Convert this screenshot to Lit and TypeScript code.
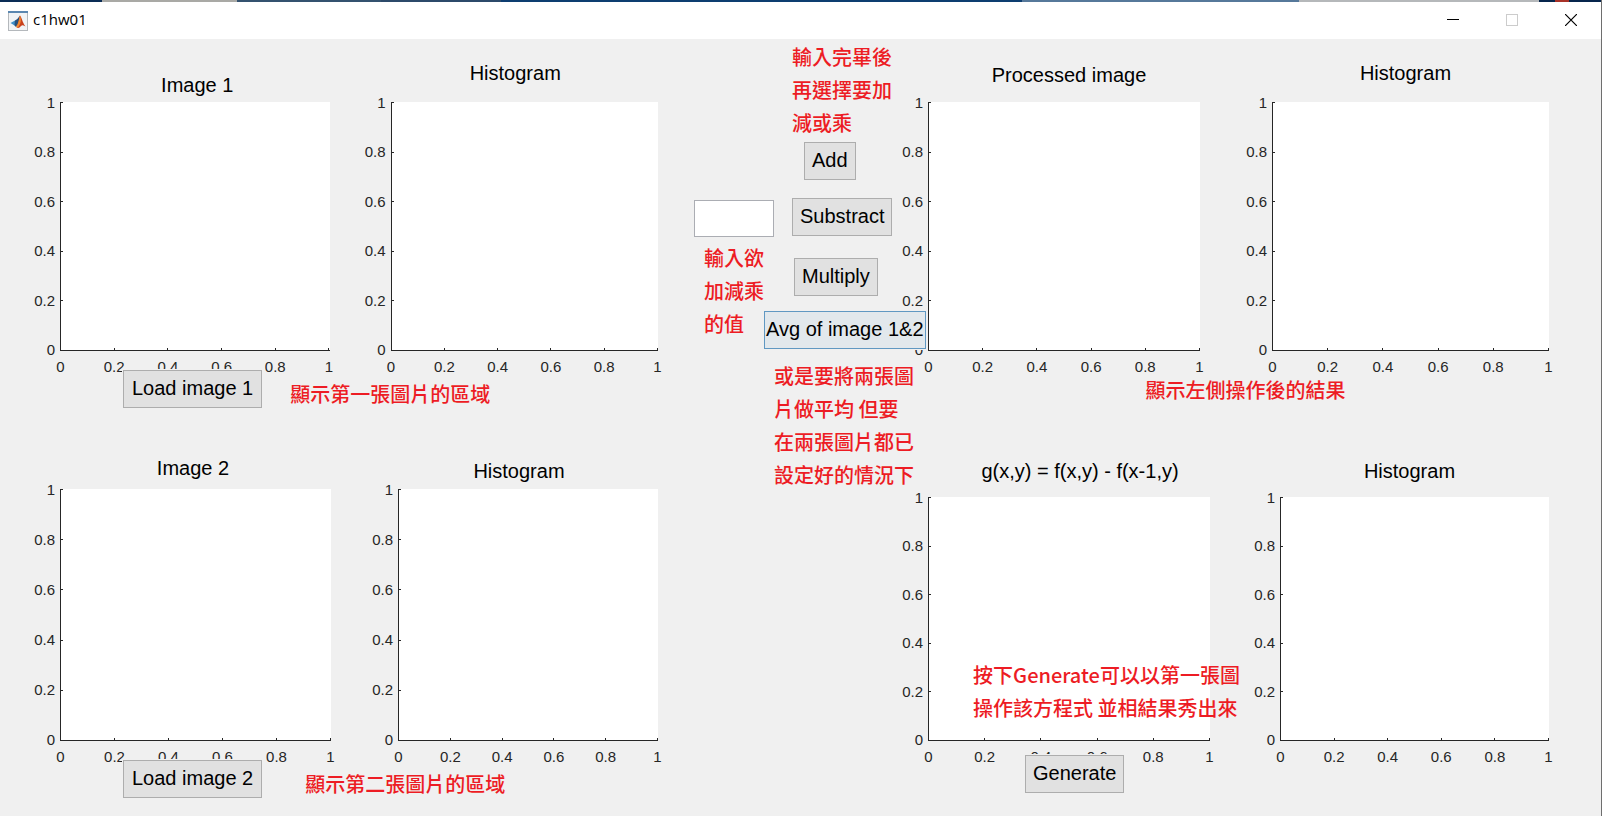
import { LitElement, html, css, svg } from "lit";
import { customElement, property } from "lit/decorators.js";

const TICKS = ["0", "0.2", "0.4", "0.6", "0.8", "1"];

@customElement("plot-axes")
export class PlotAxes extends LitElement {
  @property() heading = "";

  static styles = css`
    :host {
      display: grid;
      grid-template-columns: 28px minmax(0, 1fr);
      grid-template-rows: var(--header, 63px) minmax(0, 1fr) 25px;
      min-width: 0;
      min-height: 0;
    }
    .title {
      grid-column: 2;
      align-self: end;
      margin: 0;
      padding: 0 var(--title-right, 0) var(--title-bottom, 17px) var(--title-left, 0);
      font-size: 20px;
      font-weight: 400;
      line-height: 24px;
      text-align: center;
      white-space: nowrap;
      color: #000;
    }
    .labels {
      display: flex;
      justify-content: space-between;
      font-size: 15px;
      line-height: 16px;
      color: #262626;
    }
    .y {
      flex-direction: column-reverse;
      align-items: flex-end;
      padding-right: 5px;
    }
    .y span {
      display: flex;
      align-items: center;
      height: 1px;
    }
    .x {
      grid-column: 2;
      padding-top: 8px;
    }
    .x span {
      display: flex;
      justify-content: center;
      width: 1px;
    }
    .area {
      display: grid;
      position: relative;
      background: #fff;
    }
    .marks {
      grid-area: 1 / 1;
      display: flex;
      justify-content: space-between;
    }
    .marks i {
      background: #262626;
    }
    .marks.v {
      flex-direction: column;
      justify-self: start;
      width: 3px;
      border-left: 1px solid #262626;
      box-sizing: border-box;
    }
    .marks.v i {
      height: 1px;
    }
    .marks.h {
      align-self: end;
      height: 3px;
      border-bottom: 1px solid #262626;
      box-sizing: border-box;
    }
    .marks.h i {
      width: 1px;
    }
  `;

  render() {
    return html`
      <h2 class="title">${this.heading}</h2>
      <div class="labels y">${TICKS.map((t) => html`<span>${t}</span>`)}</div>
      <div class="area">
        <div class="marks v">${TICKS.map(() => html`<i></i>`)}</div>
        <div class="marks h">${TICKS.map(() => html`<i></i>`)}</div>
        <slot></slot>
      </div>
      <div class="labels x">${TICKS.map((t) => html`<span>${t}</span>`)}</div>
    `;
  }
}

const appIcon = svg`
  <rect x="0.5" y="0.5" width="19" height="19" fill="#f1f3f5" stroke="#b4b8bc"/>
  <rect x="0" y="0" width="20" height="2" fill="#5b87b0"/>
  <path d="M2.500 12 L7 9.500 L9.500 12 L6.500 14.500 Z" fill="#3f8fc8"/>
  <path d="M7 9.500 Q9.500 8.500 12 4.500 L10.500 13 L8 16 L6.500 14.500 Z" fill="#28507c"/>
  <path d="M12 4.500 C13.500 6 14.500 11.500 17.500 15.500 C15.500 14.500 14.500 13.500 13 15 C11.500 17 10 17.500 8.500 16.500 C10.500 13 10.500 8.500 12 4.500 Z" fill="#c9401c"/>
  <path d="M12 4.500 C13.800 9 12.600 14 9.500 16.800 L8 15.600 C10.500 13 11 8.500 12 4.500 Z" fill="#f08a32"/>
`;

@customElement("app-root")
export class AppRoot extends LitElement {
  static styles = css`
    :host {
      display: flex;
      flex-direction: column;
      min-height: 100vh;
      box-sizing: border-box;
      border-right: 1px solid #6e6e6e;
      background: #f0f0f0;
      font-family: "Liberation Sans", Arial, sans-serif;
    }
    .desktop {
      display: flex;
      height: 2px;
    }
    .navy { flex: 102 0 0; background: #0a2c55; }
    .pale { flex: 135 0 0; background: #a9a9a5; }
    .slate { flex: 144 0 0; background: #34526f; }
    .slate2 { flex: 120 0 0; background: #2c4a6a; }
    .blue { flex: 520 0 0; background: #0d3d70; }
    .mist { flex: 277 0 0; background: #56789a; }
    .light { flex: 240 0 0; background: #b5b8ba; }
    .flag { flex: 14 0 0; background: #a83228; }
    .dark { flex: 32 0 0; background: #06254c; }
    .dark.short { flex-grow: 16; }

    .titlebar {
      display: flex;
      align-items: center;
      height: 37px;
      background: #fff;
    }
    .icon {
      width: 20px;
      height: 20px;
      margin: 0 5px 0 8px;
    }
    .caption {
      flex: 1;
      margin: 0;
      padding-bottom: 3px;
      font: 400 15px/20px "Open Sans", "Noto Sans", sans-serif;
      color: #000;
    }
    .winbtn {
      display: grid;
      place-items: center;
      width: 59px;
      height: 37px;
      padding: 0 2px 2px 0;
      border: 0;
      background: none;
    }

    .figure {
      flex: 1;
      display: grid;
      grid-template-columns: minmax(0, 694fr) 206px minmax(0, 701fr);
    }
    .side {
      display: grid;
      grid-template-rows: minmax(0, 387fr) minmax(0, 390fr);
    }
    .left {
      padding: 0 36px 0 32px;
    }
    .right {
      padding-right: 52px;
    }
    .group {
      display: grid;
      grid-template-rows: minmax(0, 1fr) 50px;
      min-height: 0;
    }
    .l1 { grid-template-columns: minmax(0, 297fr) minmax(0, 295fr); column-gap: 33px; }
    .l2 { grid-template-columns: minmax(0, 299fr) minmax(0, 288fr); column-gap: 39px; --title-bottom: 6px; }
    .r1 { grid-template-columns: minmax(0, 300fr) minmax(0, 305fr); column-gap: 44px; }
    .r2 { grid-template-columns: minmax(0, 310fr) minmax(0, 297fr); column-gap: 42px; --header: 71px; --title-bottom: 14px; }
    .left .hist { --title-right: 18px; }
    .right .hist { --title-right: 10px; }
    .r1 .result { --title-left: 10px; --title-bottom: 15px; }
    .r2 .result { --title-left: 22px; }
    .l1 .source { --title-left: 5px; --title-bottom: 5px; }
    .l2 .source { --title-right: 5px; --title-bottom: 9px; }

    .foot {
      grid-column: 1 / -1;
      display: flex;
      align-items: flex-start;
      position: relative;
      z-index: 1;
    }
    .foot.load {
      margin-top: -6px;
      padding-left: 91px;
      gap: 28px;
    }
    .foot.load.wide {
      gap: 43px;
    }
    .foot.load .note {
      margin-top: 7px;
    }
    .foot.center {
      margin-top: -3px;
      padding-left: 42px;
      justify-content: center;
    }
    .foot.gen {
      margin-top: -11px;
      padding-left: 125px;
    }

    button.op {
      height: 38px;
      padding: 0 7px 2px;
      border: 1px solid #adadad;
      box-shadow: 0 0 0 1px #f0f0f0;
      background: #e1e1e1;
      font: 20px/24px "Liberation Sans", Arial, sans-serif;
      white-space: nowrap;
      color: #000;
    }
    .load button.op {
      padding: 0 8px 2px;
    }
    button.op.hot {
      padding: 0 1px 2px;
      border-color: #6098c2;
      background: #e2e8ec;
    }

    .note {
      margin: 0;
      font: 500 20px/33px "Noto Sans CJK TC", "Noto Sans", sans-serif;
      color: #ed1c24;
      white-space: nowrap;
    }
    .over {
      position: absolute;
      left: 16%;
      bottom: 17px;
    }

    .controls {
      display: grid;
      grid-template-columns: 98px minmax(0, 1fr);
      align-items: start;
      position: relative;
      z-index: 1;
    }
    .entry {
      padding-top: 161px;
    }
    .entry label {
      display: block;
      padding: 4px 0 0 10px;
    }
    .entry input {
      display: block;
      box-sizing: border-box;
      width: 80px;
      height: 37px;
      padding: 0 6px;
      border: 1px solid #abadb3;
      background: #fff;
      font: 20px/24px "Liberation Sans", Arial, sans-serif;
    }
    .ops {
      display: flex;
      flex-direction: column;
      align-items: flex-start;
      padding-top: 1px;
    }
    .ops .add { margin: 3px 0 18px 12px; }
    .ops .mul { margin: 22px 0 15px 2px; }
    .ops .hot { margin-left: -28px; }
    .ops .more { margin: 10px 0 0 -18px; }
  `;

  render() {
    return html`
      <div class="desktop">
        <span class="navy"></span><span class="pale"></span><span class="slate"></span
        ><span class="slate2"></span><span class="blue"></span><span class="mist"></span
        ><span class="light"></span><span class="dark short"></span><span class="flag"></span
        ><span class="dark"></span>
      </div>
      <header class="titlebar">
        <svg class="icon" viewBox="0 0 20 20" aria-hidden="true">${appIcon}</svg>
        <h1 class="caption">c1hw01</h1>
        <button class="winbtn" aria-label="Minimize">
          <svg width="12" height="12"><path d="M0 5.500H12" stroke="#000" /></svg>
        </button>
        <button class="winbtn" aria-label="Maximize" disabled>
          <svg width="12" height="12"><rect x=".5" y=".5" width="11" height="11" fill="none" stroke="#ccc" /></svg>
        </button>
        <button class="winbtn" aria-label="Close">
          <svg width="12" height="12"><path d="M0 0L12 12M12 0L0 12" stroke="#000" stroke-width="1.2" /></svg>
        </button>
      </header>

      <main class="figure">
        <section class="side left">
          <div class="group l1">
            <plot-axes class="source" heading="Image 1"></plot-axes>
            <plot-axes class="hist" heading="Histogram"></plot-axes>
            <div class="foot load">
              <button class="op">Load image 1</button>
              <p class="note">顯示第一張圖片的區域</p>
            </div>
          </div>
          <div class="group l2">
            <plot-axes class="source" heading="Image 2"></plot-axes>
            <plot-axes class="hist" heading="Histogram"></plot-axes>
            <div class="foot load wide">
              <button class="op">Load image 2</button>
              <p class="note">顯示第二張圖片的區域</p>
            </div>
          </div>
        </section>

        <section class="controls">
          <div class="entry">
            <input id="amount" type="text" />
            <label class="note" for="amount">輸入欲<br />加減乘<br />的值</label>
          </div>
          <div class="ops">
            <p class="note">輸入完畢後<br />再選擇要加<br />減或乘</p>
            <button class="op add">Add</button>
            <button class="op">Substract</button>
            <button class="op mul">Multiply</button>
            <button class="op hot">Avg of image 1&amp;2</button>
            <p class="note more">或是要將兩張圖<br />片做平均 但要<br />在兩張圖片都已<br />設定好的情況下</p>
          </div>
        </section>

        <section class="side right">
          <div class="group r1">
            <plot-axes class="result" heading="Processed image"></plot-axes>
            <plot-axes class="hist" heading="Histogram"></plot-axes>
            <div class="foot center">
              <p class="note">顯示左側操作後的結果</p>
            </div>
          </div>
          <div class="group r2">
            <plot-axes class="result" heading="g(x,y) = f(x,y) - f(x-1,y)">
              <p class="note over">按下Generate可以以第一張圖<br />操作該方程式 並相結果秀出來</p>
            </plot-axes>
            <plot-axes class="hist" heading="Histogram"></plot-axes>
            <div class="foot gen">
              <button class="op">Generate</button>
            </div>
          </div>
        </section>
      </main>
    `;
  }
}
